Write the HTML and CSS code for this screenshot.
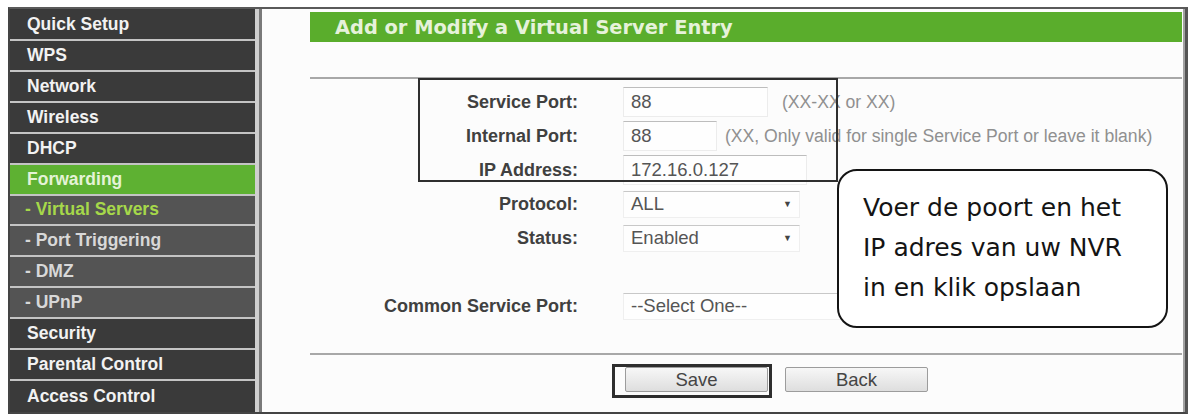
FILE: index.html
```html
<!DOCTYPE html>
<html lang="en">
<head>
    <meta charset="UTF-8">
    <meta name="viewport" content="width=device-width, initial-scale=1.0">
    <title>Virtual Servers</title>
    <link rel="stylesheet" href="styles.css">
</head>
<body>
    <div class="frame">
        <nav class="menu">
            <a class="menu-item">Quick Setup</a>
            <a class="menu-item">WPS</a>
            <a class="menu-item">Network</a>
            <a class="menu-item">Wireless</a>
            <a class="menu-item">DHCP</a>
            <a class="menu-item menu-active">Forwarding</a>
            <a class="menu-item menu-sub menu-current">- Virtual Servers</a>
            <a class="menu-item menu-sub">- Port Triggering</a>
            <a class="menu-item menu-sub">- DMZ</a>
            <a class="menu-item menu-sub">- UPnP</a>
            <a class="menu-item">Security</a>
            <a class="menu-item">Parental Control</a>
            <a class="menu-item">Access Control</a>
        </nav>

        <main class="content">
            <h2 class="title-bar">Add or Modify a Virtual Server Entry</h2>
            <div class="rule rule-top"></div>

            <form class="entry-form">
                <div class="form-row">
                    <label class="form-label">Service Port:</label>
                    <div class="form-field">
                        <input type="text" class="form-input input-port" value="88">
                        <span class="form-hint hint-service">(XX-XX or XX)</span>
                    </div>
                </div>
                <div class="form-row">
                    <label class="form-label">Internal Port:</label>
                    <div class="form-field">
                        <input type="text" class="form-input input-short" value="88">
                        <span class="form-hint">(XX, Only valid for single Service Port or leave it blank)</span>
                    </div>
                </div>
                <div class="form-row">
                    <label class="form-label">IP Address:</label>
                    <div class="form-field">
                        <input type="text" class="form-input input-ip" value="172.16.0.127">
                    </div>
                </div>
                <div class="form-row">
                    <label class="form-label">Protocol:</label>
                    <div class="form-field">
                        <div class="form-select"><span>ALL</span><span class="select-arrow">▼</span></div>
                    </div>
                </div>
                <div class="form-row">
                    <label class="form-label">Status:</label>
                    <div class="form-field">
                        <div class="form-select"><span>Enabled</span><span class="select-arrow">▼</span></div>
                    </div>
                </div>
                <div class="form-row"></div>
                <div class="form-row">
                    <label class="form-label">Common Service Port:</label>
                    <div class="form-field">
                        <div class="form-select select-wide"><span>--Select One--</span></div>
                    </div>
                </div>
            </form>

            <div class="rule rule-bottom"></div>

            <div class="button-row">
                <button type="button" class="form-button">Save</button>
                <button type="button" class="form-button">Back</button>
            </div>

            <div class="mark mark-fields"></div>
            <div class="mark mark-save"></div>
            <div class="callout">Voer de poort en het<br>IP adres van uw NVR<br>in en klik opslaan</div>
        </main>
    </div>
</body>
</html>
```

FILE: styles.css
```css
* {
    margin: 0;
    padding: 0;
    box-sizing: border-box;
}

body {
    font-family: "Liberation Sans", Arial, sans-serif;
    background-color: #ffffff;
}

.frame {
    display: flex;
    width: 1180px;
    height: 407px;
    margin: 7px 0 0 8px;
    border-top: 2px solid #5a5a5a;
    border-left: 2px solid #444444;
    border-right: 3px solid #555555;
    border-bottom: 2px solid #444444;
}

/* left menu */

.menu {
    width: 249px;
    padding-top: 1px;
    background-color: #3a3a3a;
    border-right: 4px solid #cfcfcf;
    display: flex;
    flex-direction: column;
}

.menu-item {
    display: flex;
    align-items: center;
    height: 31px;
    padding-left: 17px;
    border-bottom: 2px solid #c4c4c4;
    background-color: #3a3a3a;
    color: #f2f2f2;
    font-size: 17.5px;
    font-weight: bold;
    text-decoration: none;
}

.menu-item:last-child {
    border-bottom: none;
}

.menu-active {
    background-color: #5eb132;
    color: #e4f3d6;
}

.menu-sub {
    padding-left: 15px;
    background-color: #545454;
    color: #d8d8d8;
}

.menu-current {
    color: #a6d84a;
}

/* main panel */

.content {
    position: relative;
    flex: 1;
    padding: 3px 1px 0 48px;
    background-color: #fcfcfc;
    border-left: 3px solid #7a7a7a;
    border-right: 2px solid #a2a2a2;
}

.title-bar {
    height: 30px;
    display: flex;
    align-items: center;
    padding-left: 25px;
    background-color: #5aad2c;
    color: #e6f2da;
    font-family: "DejaVu Sans", Verdana, sans-serif;
    font-size: 19.4px;
    font-weight: bold;
}

.rule {
    height: 2px;
    background-color: #a8a8a8;
}

.rule-top {
    margin-top: 35px;
}

.rule-bottom {
    margin-top: 30px;
}

.entry-form {
    margin-top: 6px;
}

.form-row {
    display: grid;
    grid-template-columns: 268px 1fr;
    column-gap: 45px;
    align-items: center;
    height: 34px;
}

.form-label {
    text-align: right;
    color: #404040;
    font-size: 18px;
    font-weight: bold;
}

.form-field {
    display: flex;
    align-items: center;
}

.form-input {
    height: 30px;
    padding: 0 7px;
    border: 1px solid #ececec;
    border-top: 1px solid #bdbdbd;
    background-color: #fefefe;
    color: #555555;
    font-family: "Liberation Sans", Arial, sans-serif;
    font-size: 18.5px;
}

.input-port {
    width: 145px;
}

.input-short {
    width: 94px;
}

.input-ip {
    width: 184px;
}

.form-hint {
    margin-left: 8px;
    color: #909090;
    font-size: 17.6px;
    white-space: nowrap;
}

.hint-service {
    margin-left: 14px;
}

.form-select {
    display: flex;
    justify-content: space-between;
    align-items: center;
    width: 177px;
    height: 27px;
    padding: 0 7px 0 7px;
    border: 1px solid #efefef;
    border-top: 1px solid #c8c8c8;
    background-color: #fefefe;
    color: #555555;
    font-size: 18.5px;
}

.select-wide {
    width: 250px;
}

.select-arrow {
    font-size: 9px;
    color: #444444;
}

.button-row {
    display: flex;
    gap: 17px;
    margin-top: 12px;
    padding-left: 315px;
}

.form-button {
    width: 143px;
    height: 25px;
    border: 1px solid #9c9c9c;
    border-radius: 2px;
    background: linear-gradient(#f7f7f7, #dedede);
    color: #454545;
    font-family: "Liberation Sans", Arial, sans-serif;
    font-size: 18.5px;
}

/* annotations drawn over the screenshot */

.mark {
    position: absolute;
    border: 2px solid #2e2e2e;
}

.mark-fields {
    left: 156px;
    top: 69px;
    width: 420px;
    height: 104px;
}

.mark-save {
    left: 350px;
    top: 355px;
    width: 160px;
    height: 34px;
    border-width: 3px;
}

.callout {
    position: absolute;
    left: 575px;
    top: 160px;
    width: 331px;
    height: 159px;
    padding: 17px 0 0 24px;
    border: 2px solid #141414;
    border-radius: 20px;
    background-color: #ffffff;
    color: #141414;
    font-family: "DejaVu Sans", Verdana, sans-serif;
    font-size: 25px;
    line-height: 40px;
}
```
